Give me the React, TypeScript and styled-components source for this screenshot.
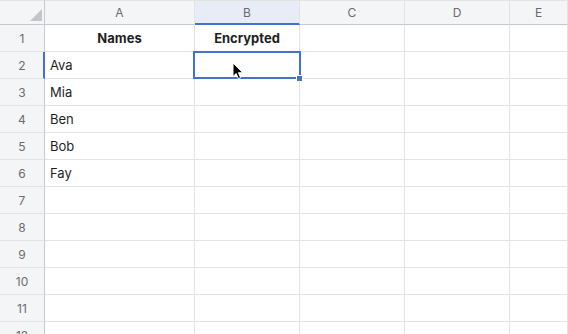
import React from "react";
import styled, { createGlobalStyle } from "styled-components";

const Global = createGlobalStyle`
  html, body { margin: 0; padding: 0; background: #fff; }
  body { font-family: Inter, "Noto Sans", "Liberation Sans", sans-serif; overflow: hidden; }
`;

const BLUE = "#4470d6";
const HEADER_BG = "#f4f5f7";
const GRID = "#e3e3e3";
const HEADER_LINE = "#c9c9cc";

const Sheet = styled.div`
  position: relative;
  width: 568px;
  height: 334px;
  overflow: hidden;
  display: grid;
  grid-template-columns: 45px 150px 105px 105px 105px 58px;
  grid-auto-rows: 27px;
  grid-template-rows: 25px;
`;

const Corner = styled.div`
  position: relative;
  background: ${HEADER_BG};
  border-top: 1px solid ${GRID};
  border-right: 1px solid ${HEADER_LINE};
  border-bottom: 1px solid ${HEADER_LINE};
  display: flex;
  align-items: flex-end;
  justify-content: flex-end;
  padding: 0 2px 3px 0;
`;

const Triangle = styled.div`
  width: 12px;
  height: 12px;
  background: #c3c5c9;
  clip-path: polygon(100% 0, 100% 100%, 0 100%);
`;

const ColHeader = styled.div<{ $active?: boolean }>`
  background: ${(p) => (p.$active ? "#e7ecf6" : HEADER_BG)};
  border-top: 1px solid ${GRID};
  border-right: 1px solid ${GRID};
  border-bottom: ${(p) => (p.$active ? `2px solid ${BLUE}` : `1px solid ${HEADER_LINE}`)};
  display: flex;
  align-items: center;
  justify-content: center;
  font-size: 12px;
  color: #6b6b6e;
  padding-top: ${(p) => (p.$active ? "1px" : "0")};
`;

const RowHeader = styled.div<{ $active?: boolean }>`
  background: ${HEADER_BG};
  border-right: ${(p) => (p.$active ? `2px solid ${BLUE}` : `1px solid ${HEADER_LINE}`)};
  border-bottom: 1px solid ${GRID};
  display: flex;
  align-items: center;
  justify-content: center;
  font-size: 12px;
  color: #6b6b6e;
  padding-left: ${(p) => (p.$active ? "1px" : "0")};
`;

const Cell = styled.div<{ $bold?: boolean; $center?: boolean; $selected?: boolean }>`
  position: relative;
  border-right: 1px solid ${GRID};
  border-bottom: 1px solid ${GRID};
  display: flex;
  align-items: center;
  justify-content: ${(p) => (p.$center ? "center" : "flex-start")};
  padding: 0 5px;
  font-size: 13px;
  font-weight: ${(p) => (p.$bold ? 700 : 400)};
  color: #1f1f1f;
  ${(p) =>
    p.$selected &&
    `
    &::after {
      content: "";
      position: absolute;
      left: -2px; top: -1px; right: -2px; bottom: -1px;
      border: 2px solid ${BLUE};
      z-index: 2;
    }
    &::before {
      content: "";
      position: absolute;
      right: -4px; bottom: -4px;
      width: 5px; height: 5px;
      background: ${BLUE};
      border: 1px solid #fff;
      z-index: 3;
    }
  `}
`;

const Pointer = styled.svg`
  position: absolute;
  left: 232px;
  top: 62px;
  z-index: 5;
`;

const cols = ["A", "B", "C", "D", "E"];
const data: Record<number, [string, string]> = {
  1: ["Names", "Encrypted"],
  2: ["Ava", ""],
  3: ["Mia", ""],
  4: ["Ben", ""],
  5: ["Bob", ""],
  6: ["Fay", ""],
};

export default function App() {
  const rows = Array.from({ length: 12 }, (_, i) => i + 1);
  return (
    <>
      <Global />
      <Sheet>
        <Corner>
          <Triangle />
        </Corner>
        {cols.map((c) => (
          <ColHeader key={c} $active={c === "B"}>
            {c}
          </ColHeader>
        ))}
        {rows.map((r) => {
          const d = data[r] || ["", ""];
          const header = r === 1;
          return (
            <React.Fragment key={r}>
              <RowHeader $active={r === 2}>{r}</RowHeader>
              <Cell $bold={header} $center={header}>{d[0]}</Cell>
              <Cell $bold={header} $center={header} $selected={r === 2}>
                {d[1]}
              </Cell>
              <Cell />
              <Cell />
              <Cell />
            </React.Fragment>
          );
        })}
        <Pointer width="12" height="18" viewBox="0 0 12 18">
          <path
            d="M1 1 L1 14.5 L4.2 11.5 L6.4 16.6 L8.6 15.7 L6.4 10.7 L10.8 10.7 Z"
            fill="#000"
            stroke="#fff"
            strokeWidth="1"
            strokeLinejoin="round"
          />
        </Pointer>
      </Sheet>
    </>
  );
}
